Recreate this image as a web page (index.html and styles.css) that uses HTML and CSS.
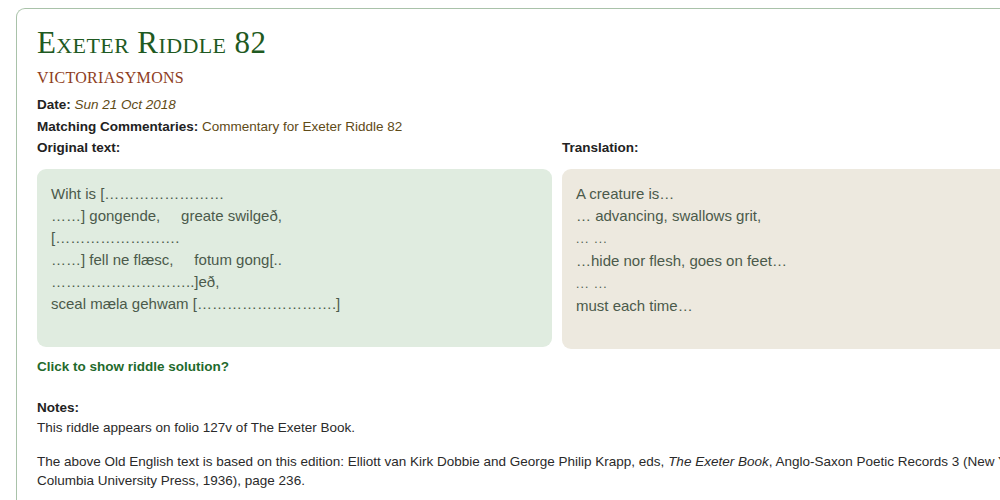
FILE: index.html
```html
<!DOCTYPE html>
<html>
<head>
<meta charset="utf-8">
<link rel="stylesheet" href="styles.css">
</head>
<body>
<div class="card">
  <h1 class="title">Exeter Riddle 82</h1>
  <div class="author">VICTORIASYMONS</div>
  <div class="meta meta-first"><b>Date:</b> <i class="olive">Sun 21 Oct 2018</i></div>
  <div class="meta"><b>Matching Commentaries:</b> <span class="olive">Commentary for Exeter Riddle 82</span></div>
  <div class="cols">
    <div class="col">
      <div class="label">Original text:</div>
      <div class="box box-oe">
        <p>Wiht is [……………………<br>……] gongende,&nbsp;&nbsp;&nbsp;&nbsp; greate swilgeð,<br>[…………………….<br>……] fell ne flæsc,&nbsp;&nbsp;&nbsp;&nbsp; fotum gong[..<br>………………………..]eð,<br>sceal mæla gehwam [……………………….]</p>
      </div>
    </div>
    <div class="col">
      <div class="label">Translation:</div>
      <div class="box box-tr">
        <p>A creature is…<br>… advancing, swallows grit,<br><span class="dots">... ...</span><br>…hide nor flesh, goes on feet…<br><span class="dots">... ...</span><br>must each time…</p>
      </div>
    </div>
  </div>
  <div class="solution">Click to show riddle solution?</div>
  <div class="notes">
    <div class="label">Notes:</div>
    <p class="note">This riddle appears on folio 127v of The Exeter Book.</p>
    <p class="note">The above Old English text is based on this edition: Elliott van Kirk Dobbie and George Philip Krapp, eds, <i>The Exeter Book</i>, Anglo-Saxon Poetic Records 3 (New York:<br>Columbia University Press, 1936), page 236.</p>
  </div>
</div>
</body>
</html>
```
FILE: styles.css
```css
html, body {
  margin: 0;
  padding: 0;
  background: #ffffff;
  overflow: hidden;
}
body {
  font-family: "Liberation Sans", Arial, sans-serif;
  font-size: 13.5px;
  color: #2a2a2a;
}
.card {
  margin: 8px 0 0 16px;
  width: 1100px;
  box-sizing: border-box;
  border: 1.5px solid #a9c2a9;
  border-right: none;
  border-radius: 9px 0 0 0;
  padding: 16px 0 20px 20px;
  min-height: 600px;
}
.title {
  margin: 0;
  font-family: "Liberation Serif", "Times New Roman", serif;
  font-variant: small-caps;
  font-weight: normal;
  font-size: 31px;
  line-height: 36px;
  color: #1f5a22;
  letter-spacing: 0.4px;
}
.author {
  margin-top: 6px;
  font-family: "Liberation Serif", "Times New Roman", serif;
  font-size: 16px;
  line-height: 22px;
  color: #8e3d22;
  letter-spacing: 0.3px;
}
.meta {
  line-height: 22px;
}
.meta-first { margin-top: 5px; }
.meta b { color: #222; }
.olive { color: #5f4b17; }
.cols {
  display: grid;
  grid-template-columns: 515px 515px;
  column-gap: 10px;
}
.label {
  font-weight: bold;
  color: #222;
  line-height: 20px;
}
.box {
  margin-top: 11px;
  border-radius: 9px;
  padding: 14px 14px 16px 14px;
  color: #4b5a4b;
  font-size: 15px;
  line-height: 22px;
  min-height: 145px;
}
.box p { margin: 0 0 16px 0; }
.box-oe { background: #e0ece0; }
.box-tr { background: #ede9df; }
.dots { font-size: 12px; letter-spacing: 1.2px; }
.solution {
  margin-top: 7px;
  font-weight: bold;
  color: #1f6a2c;
  line-height: 22px;
}
.notes {
  margin-top: 20px;
}
.note {
  margin: 0 0 15px 0;
  line-height: 19px;
  white-space: nowrap;
}
```
